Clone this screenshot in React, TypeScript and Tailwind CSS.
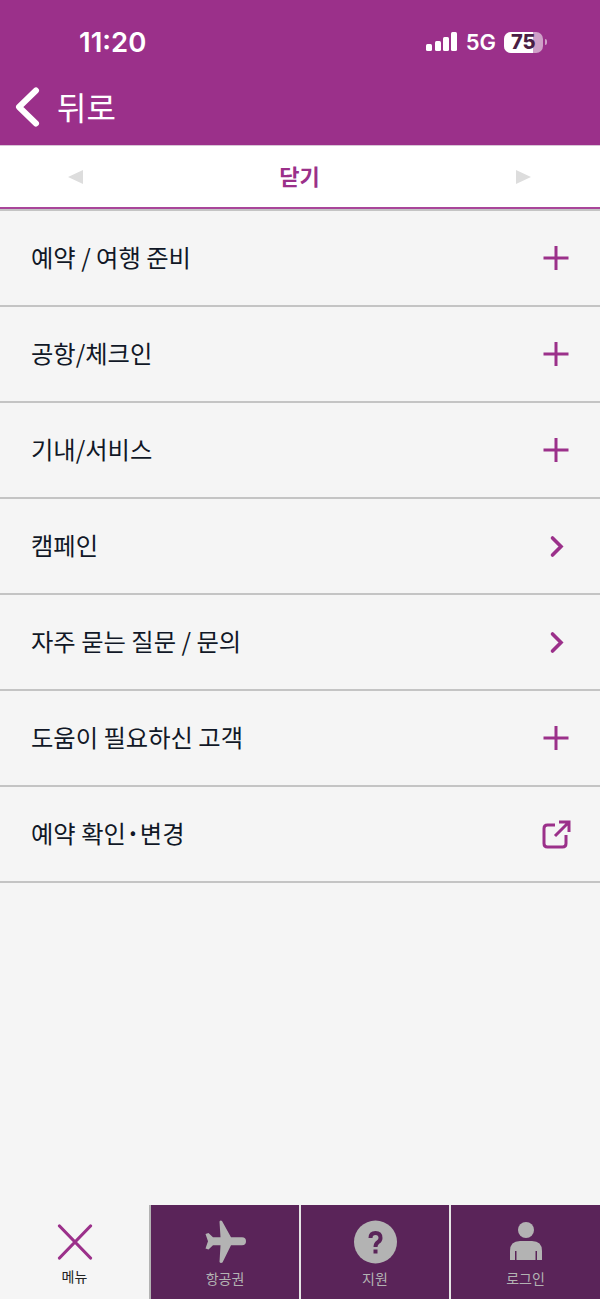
const FONT = "font-['Noto_Sans_CJK_KR','Noto_Sans',sans-serif]";
const PURPLE = "#9b308a";

type Row = { label: string; icon: "plus" | "chevron" | "external" };

const rows: Row[] = [
  { label: "예약 / 여행 준비", icon: "plus" },
  { label: "공항/체크인", icon: "plus" },
  { label: "기내/서비스", icon: "plus" },
  { label: "캠페인", icon: "chevron" },
  { label: "자주 묻는 질문 / 문의", icon: "chevron" },
  { label: "도움이 필요하신 고객", icon: "plus" },
];

function RowIcon({ type }: { type: Row["icon"] }) {
  return (
    <svg width="30" height="30" viewBox="0 0 30 30" fill="none" stroke={PURPLE} strokeWidth="3">
      {type === "plus" && <path d="M2.5 15H27.5M15 3V27" />}
      {type === "chevron" && <path d="M11.5 7L20 15.5L11.5 24" strokeWidth="3.6" strokeLinecap="round" />}
      {type === "external" && (
        <>
          <path d="M14 6H6.5Q3 6 3 9.5V24.5Q3 28 6.5 28H21.5Q25 28 25 24.5V16" />
          <path d="M14 17L26.5 4.5M18 3H28V13" />
        </>
      )}
    </svg>
  );
}

function MenuRow({ icon, children }: { icon: Row["icon"]; children: React.ReactNode }) {
  return (
    <li className="h-[96px] border-b-2 border-b-[#c4c4c4] flex items-center justify-between pl-[31px] pr-[29px]">
      <span className="text-[24.3px] leading-[32px] text-[#111827] mb-[2px]">{children}</span>
      <RowIcon type={icon} />
    </li>
  );
}

function TabLabel({ children, dark }: { children: string; dark?: boolean }) {
  return <span className={`text-[14px] leading-[18px] ${dark ? "text-[#222]" : "text-[#b3b3b3]"}`}>{children}</span>;
}

export default function App() {
  return (
    <div className={`${FONT} w-[600px] h-[1299px] flex flex-col bg-[#f5f5f5] overflow-hidden`}>
      <header className="bg-[#9b308a] h-[145px] shrink-0 flex flex-col text-white">
        <div className="h-[72px] flex items-end pb-[15px] pl-[79px] pr-[53px] justify-between">
          <span className="font-['Inter',sans-serif] text-[27.5px] leading-[30px] font-semibold">11:20</span>
          <div className="flex items-center font-['Inter',sans-serif] mb-[3px]">
            <svg width="31" height="20" viewBox="0 0 31 20" fill="white">
              <rect x="0" y="12" width="6" height="7" rx="1.5" />
              <rect x="9" y="9" width="6" height="10" rx="1.5" />
              <rect x="17" y="5" width="6" height="14" rx="1.5" />
              <rect x="25" y="0" width="6" height="19" rx="1.5" />
            </svg>
            <span className="ml-[9px] text-[22px] leading-[24px] font-semibold">5G</span>
            <div className="ml-[8px] flex items-center gap-[2px]">
              <div className="relative w-[39px] h-[21px] rounded-[7px] bg-[#cfa0c8] overflow-hidden">
                <div className="absolute left-0 top-0 bottom-0 w-[29px] bg-white" />
                <span className="absolute left-[7px] top-0 bottom-0 flex items-center text-[#4a1e44] text-[20px] font-extrabold leading-none">75</span>
              </div>
              <div className="w-[2px] h-[6px] bg-[#cfa0c8] rounded-r-full" />
            </div>
          </div>
        </div>
        <div className="mt-[10px] flex items-center pl-[15px] h-[48px] gap-[17px]">
          <svg className="mt-[2px]" width="25" height="40" viewBox="0 0 25 40" fill="none" stroke="white" strokeWidth="6" strokeLinecap="round" strokeLinejoin="round">
            <path d="M21 3.5L4 20L21 36.5" />
          </svg>
          <span className="text-[32px] leading-[40px]">뒤로</span>
        </div>
      </header>

      <div className="h-[64px] shrink-0 bg-white border-t border-t-[#d8c5d6] border-b-2 border-b-[#a9469a] flex items-center justify-between pl-[68px] pr-[69px]">
        <span className="w-0 h-0 border-y-[7px] border-y-transparent border-r-[15px] border-r-[#dddddd]" />
        <span className="text-[22px] font-semibold text-[#9b308a] leading-[30px] mb-[3px]">닫기</span>
        <span className="w-0 h-0 border-y-[7px] border-y-transparent border-l-[15px] border-l-[#dddddd]" />
      </div>

      <ul className="border-t-2 border-t-[#c4c4c4]">
        {rows.map((row) => (
          <MenuRow key={row.label} icon={row.icon}>
            {row.label}
          </MenuRow>
        ))}
        <MenuRow icon="external">
          예약 확인<span className="inline-block w-[14px] text-center font-bold">·</span>변경
        </MenuRow>
      </ul>

      <nav className="mt-auto h-[94px] shrink-0 grid grid-cols-[149px_150px_150px_151px]">
        <div className="flex flex-col items-center pt-[19px] gap-[7px]">
          <svg width="36" height="36" viewBox="0 0 36 36" stroke={PURPLE} strokeWidth="3.2" strokeLinecap="round">
            <path d="M2.5 2L33.5 34M33.5 2L2.5 34" />
          </svg>
          <TabLabel dark>메뉴</TabLabel>
        </div>
        <div className="bg-[#5a2459] border-l-2 border-l-[#b3b3b3] flex flex-col items-center pt-[15px] gap-[5px]">
          <svg className="ml-[2px]" width="42" height="44" viewBox="0 0 42 44" fill="#b3b3b3">
            <path d="M14.5 1.5Q15.5 0 17 1L26 17.3H37A4 4 0 0 1 37 25.3H26L17.5 42.5Q15.5 43.5 14.5 42L15.5 25.3H8L3.5 29.5L0.5 28.5L3 21.3L0.5 14L3.5 13L8 17.3H15.5Z" />
          </svg>
          <TabLabel>항공권</TabLabel>
        </div>
        <div className="bg-[#5a2459] border-l-2 border-l-[#e5e5e5] flex flex-col items-center pt-[15px] gap-[5px]">
          <svg width="43" height="44" viewBox="0 0 43 44">
            <circle cx="21.5" cy="22" r="21.5" fill="#b3b3b3" />
            <path d="M16.5 18Q16.5 13 21.5 13Q26.5 13 26.5 18Q26.5 20.5 24 22.2Q21.5 24 21.5 27" fill="none" stroke="#5a2459" strokeWidth="4" />
            <rect x="19.5" y="29.5" width="4" height="4" fill="#5a2459" />
          </svg>
          <TabLabel>지원</TabLabel>
        </div>
        <div className="bg-[#5a2459] border-l-2 border-l-[#e5e5e5] flex flex-col items-center pt-[15px] gap-[5px]">
          <svg width="32" height="44" viewBox="0 0 32 44" fill="#b3b3b3">
            <circle cx="16" cy="10" r="8" />
            <path d="M0 31Q0 21 10 21H22Q32 21 32 31V40H27V31H25.5V40H6.5V31H5V40H0Z" />
          </svg>
          <TabLabel>로그인</TabLabel>
        </div>
      </nav>
    </div>
  );
}
